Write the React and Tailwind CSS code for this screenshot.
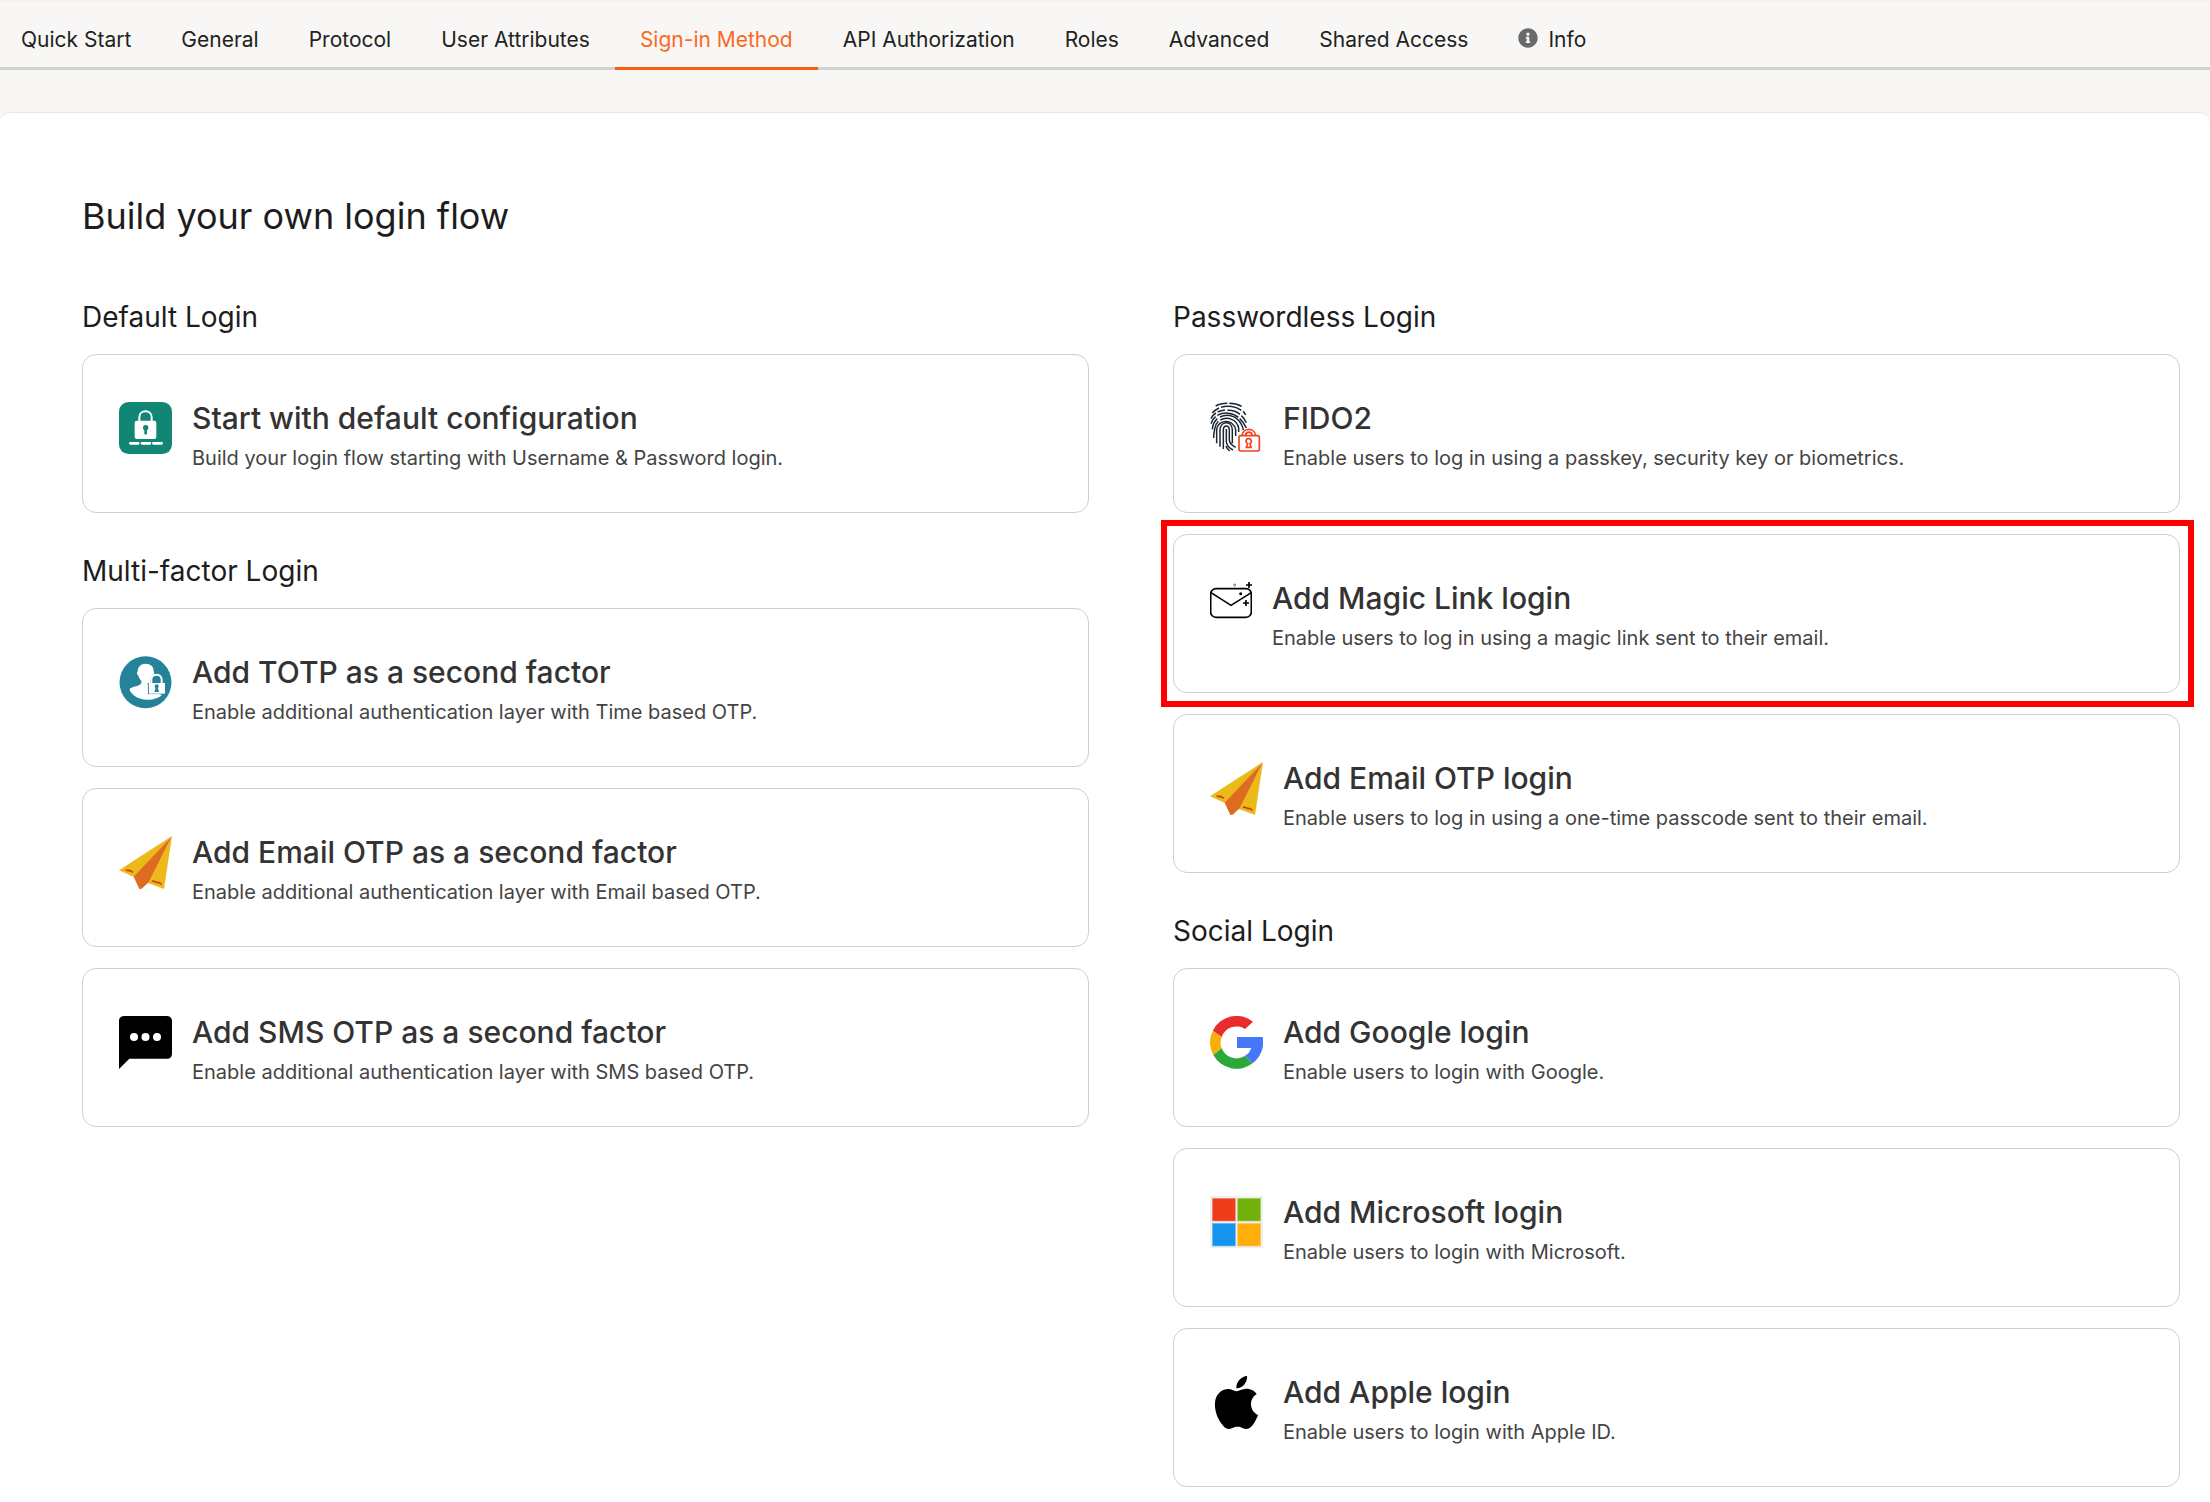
import React from "react";
import { FaInfoCircle } from "react-icons/fa";
import { SiApple } from "react-icons/si";

const TABS = [
  "Quick Start",
  "General",
  "Protocol",
  "User Attributes",
  "Sign-in Method",
  "API Authorization",
  "Roles",
  "Advanced",
  "Shared Access",
];

function DefaultIcon() {
  return (
    <svg viewBox="57 66 159 156" className="h-[52px] w-[53px]" aria-hidden="true">
      <rect x="57" y="66" width="159" height="156" rx="29" fill="#118674" />
      <path d="M118 124v-12c0-24 37-24 37 0v12" fill="none" stroke="#fff" strokeWidth="6" />
      <rect x="104" y="122" width="65" height="55" rx="7" fill="#fff" />
      <circle cx="137" cy="143" r="8" fill="#118674" />
      <path d="M133 146h8v17h-8z" fill="#118674" />
      <path d="M91 190h24M126 190h24M160 190h25" stroke="#fff" strokeWidth="8" strokeLinecap="round" />
    </svg>
  );
}

function TotpIcon() {
  return (
    <svg viewBox="57 47 159 159" className="h-[53px] w-[53px]" aria-hidden="true">
      <circle cx="136.500" cy="126" r="78" fill="#258399" />
      <path
        d="M137 70c-15 0-24 10-24 23-4 3-2 11 2 13 2 7 5 11 9 15 2 10-6 14-16 17-12 3-19 5-19 10 1 9 22 30 52 30 20 0 38-6 48-18v-28h-38v-14c6-6 8-10 8-13 4-3 4-10 2-13 0-13-9-22-24-22z"
        fill="#fff"
      />
      <path d="M145 128h7v-8c0-26 36-26 36 0v8h8v35h-54v-35z" fill="#258399" />
      <path d="M154 130v-12c0-20 31-20 31 0v12" fill="none" stroke="#fff" strokeWidth="6" />
      <path d="M147 128h48v32h-48z" fill="#fff" />
      <path d="M143 130v33h38" fill="none" stroke="#fff" strokeWidth="3" />
      <circle cx="170" cy="138" r="6" fill="#258399" />
      <path d="M168 138h4l5 17h-14z" fill="#258399" />
    </svg>
  );
}

function PlaneIcon() {
  return (
    <svg viewBox="57 45 159 159" className="h-[53px] w-[53px]" aria-hidden="true">
      <path d="M216 45 57 148l45 20z" fill="#ebb918" />
      <path d="M216 45 192 204l-48-18z" fill="#ebb918" />
      <path d="M216 45 101 167l17 37 7-1 21-19z" fill="#dd6b20" />
      <path d="M77 146l8 3 5-1 9 6M156 180l9 2 5 2 7 1 8 5" fill="none" stroke="#cb3a1b" strokeWidth="5" strokeLinejoin="round" />
    </svg>
  );
}

function SmsIcon() {
  return (
    <svg viewBox="57 585 159 159" className="h-[53px] w-[53px]" aria-hidden="true">
      <path d="M72 585h129c9 0 15 6 15 15v98c0 9-6 15-15 15H88l-31 31V600c0-9 6-15 15-15z" fill="#000" />
      <g fill="#fff">
        <circle cx="102" cy="648" r="12" />
        <circle cx="136.500" cy="648" r="12" />
        <circle cx="171" cy="648" r="12" />
      </g>
    </svg>
  );
}

function FingerprintIcon() {
  return (
    <svg viewBox="60 64 159 159" className="h-[53px] w-[53px]" aria-hidden="true">
      <g fill="none" stroke="#1d2733" strokeWidth="4.500">
        <path d="M77 76c12-7 22-8 35-8M118 68c14 0 26 3 37 9" />
        <path d="M67 97c6-7 12-11 20-15M93 80c20-6 45-3 61 9M159 92c4 3 6 6 8 11" />
        <path d="M63 114c4-8 8-13 15-17M83 94c8-4 14-5 22-6M112 89c16-1 28 4 38 12M154 105c6 5 11 13 15 21" />
        <path d="M63 129c3-9 7-16 14-21M82 104c21-11 47-8 63 6M149 114c9 8 15 16 20 28" />
        <path d="M67 146c1-14 6-24 15-32M90 109c19-9 41-5 54 8 8 8 14 18 16 32" />
        <path d="M71 172c-1-9 2-18 3-27 1-10 5-17 11-23M91 118c22-12 50-1 55 24v12" />
        <path d="M80 188v-41c3-31 49-35 57 0v19" />
        <path d="M90 198v-50c1-27 35-30 37-1v41" />
        <path d="M100 205v-58c1-15 17-15 18 0v32c1 8 8 15 19 21" />
        <path d="M109 145v39c1 9 7 17 20 24M108 196c2 6 5 10 11 15" />
      </g>
      <path d="M141 162l13-3c5-22 40-22 45 0l11 4v50h-69z" fill="#fff" />
      <g fill="none" stroke="#f5411d" strokeWidth="5">
        <rect x="147" y="165" width="61" height="46" rx="5" />
        <path d="M156 164c3-24 38-24 41 0M166 164c2-13 19-13 21 0" />
        <path d="M173 189c-9-5-5-15 3-15s12 10 4 15l3 11h-14z" />
      </g>
    </svg>
  );
}

function MagicLinkIcon() {
  return (
    <svg viewBox="60 63 126 153" className="h-[51px] w-[42px]" aria-hidden="true">
      <rect x="62" y="83" width="122" height="86" rx="16" fill="none" stroke="#000" strokeWidth="5" />
      <path d="M63 95l60 38 61-38" fill="none" stroke="#000" strokeWidth="5" />
      <circle cx="134" cy="72" r="3" fill="none" stroke="#000" strokeWidth="1.500" />
      <circle cx="152" cy="98" r="4.500" fill="#000" />
      <path d="M168 72h18M177 63v18M159 126h18M168 117v18" stroke="#000" strokeWidth="5" />
    </svg>
  );
}

function GoogleIcon() {
  return (
    <svg viewBox="60 75 159 159" className="h-[53px] w-[53px]" aria-hidden="true">
      <path d="M68.500 119A79.500 79.500 0 0 1 189 92l-24 22A47 47 0 0 0 95 138z" fill="#ea2b2b" />
      <path d="M68.500 119 95 138a47 47 0 0 0 0 34l-25 20a79.500 79.500 0 0 1-1.500-73z" fill="#fbaf0b" />
      <path d="M70 192l25-20a47 47 0 0 0 69 23l24 22A79.500 79.500 0 0 1 70 192z" fill="#28a938" />
      <path d="M141 138h77a79.500 79.500 0 0 1-30 79l-24-22a42 42 0 0 0 20-24h-43z" fill="#4578f8" />
    </svg>
  );
}

function MicrosoftIcon() {
  return (
    <svg viewBox="60 615 159 156" className="h-[52px] w-[53px]" aria-hidden="true">
      <rect x="60" y="615" width="159" height="156" fill="#f0f0f0" />
      <rect x="67" y="622" width="69" height="68" fill="#ee3d1b" stroke="#f38a75" strokeWidth="2" />
      <rect x="143" y="622" width="69" height="68" fill="#72b00b" stroke="#a7ce67" strokeWidth="2" />
      <rect x="67" y="697" width="69" height="68" fill="#1494ee" stroke="#6cbcf4" strokeWidth="2" />
      <rect x="143" y="697" width="69" height="68" fill="#ffae0c" stroke="#fdca68" strokeWidth="2" />
    </svg>
  );
}

function AppleIcon() {
  return (
    <span className="flex w-[53px] justify-center">
      <SiApple className="size-[53px] text-black" aria-hidden="true" />
    </span>
  );
}

function Card({ icon, title, text, highlighted }) {
  return (
    <li className="relative">
      <button
        type="button"
        className="flex h-[159px] w-full items-start rounded-[14px] border border-[#cfcfcf] bg-white px-9 pt-[45px] text-left"
      >
        <span className="mt-0.5 shrink-0">{icon}</span>
        <span className="ml-5 flex flex-col gap-2.5">
          <span className="text-[30px] leading-9 font-medium text-[#333]">{title}</span>
          <span className="text-[20px] leading-6 text-[#444]">{text}</span>
        </span>
      </button>
      {highlighted && (
        <span className="pointer-events-none absolute -inset-y-3.5 -right-3.5 -left-3 border-[6px] border-[#ff0000]" />
      )}
    </li>
  );
}

function Section({ title, children }) {
  return (
    <section>
      <h2 className="mb-[19px] text-[28px] leading-9 text-[#1d1d1d]">{title}</h2>
      <ul className="flex flex-col gap-[21px]">{children}</ul>
    </section>
  );
}

export default function App() {
  return (
    <div className="min-h-screen bg-[#f8f7f5] font-['Inter',sans-serif]">
      <nav className="border-t-2 border-[#f2f1ef]">
        <ul className="flex border-b-[3px] border-[#d0d0ce] text-[21px] leading-6 text-[#222]">
          {TABS.map((tab) => (
            <li key={tab} className="-mb-[3px] first:-ml-1">
              <a
                href="#"
                aria-current={tab === "Sign-in Method" ? "page" : undefined}
                className={
                  "block border-b-[3px] px-[25px] pt-[26px] pb-[15px] whitespace-nowrap " +
                  (tab === "Sign-in Method" ? "border-[#fa5c0c] text-[#fa6a1c]" : "border-transparent")
                }
              >
                {tab}
              </a>
            </li>
          ))}
          <li>
            <a href="#" className="flex gap-2.5 px-[25px] pt-[26px] pb-[15px]">
              <FaInfoCircle className="size-5 text-[#6a6a6a]" aria-hidden="true" />
              Info
            </a>
          </li>
        </ul>
      </nav>
      <main className="mt-[42px] min-h-[1390px] rounded-t-[10px] border-t border-[#e6e6e4] bg-white pt-20 pr-[30px] pb-4 pl-[82px]">
        <h1 className="text-[36px] leading-[46px] text-[#1d1d1d]">Build your own login flow</h1>
        <div className="mt-[60px] grid grid-cols-2 items-start gap-x-[84px]">
          <div className="flex flex-col gap-10">
            <Section title="Default Login">
              <Card
                icon={<DefaultIcon />}
                title="Start with default configuration"
                text="Build your login flow starting with Username & Password login."
              />
            </Section>
            <Section title="Multi-factor Login">
              <Card
                icon={<TotpIcon />}
                title="Add TOTP as a second factor"
                text="Enable additional authentication layer with Time based OTP."
              />
              <Card
                icon={<PlaneIcon />}
                title="Add Email OTP as a second factor"
                text="Enable additional authentication layer with Email based OTP."
              />
              <Card
                icon={<SmsIcon />}
                title="Add SMS OTP as a second factor"
                text="Enable additional authentication layer with SMS based OTP."
              />
            </Section>
          </div>
          <div className="flex flex-col gap-10">
            <Section title="Passwordless Login">
              <Card
                icon={<FingerprintIcon />}
                title="FIDO2"
                text="Enable users to log in using a passkey, security key or biometrics."
              />
              <Card
                highlighted
                icon={<MagicLinkIcon />}
                title="Add Magic Link login"
                text="Enable users to log in using a magic link sent to their email."
              />
              <Card
                icon={<PlaneIcon />}
                title="Add Email OTP login"
                text="Enable users to log in using a one-time passcode sent to their email."
              />
            </Section>
            <Section title="Social Login">
              <Card icon={<GoogleIcon />} title="Add Google login" text="Enable users to login with Google." />
              <Card icon={<MicrosoftIcon />} title="Add Microsoft login" text="Enable users to login with Microsoft." />
              <Card icon={<AppleIcon />} title="Add Apple login" text="Enable users to login with Apple ID." />
            </Section>
          </div>
        </div>
      </main>
    </div>
  );
}
